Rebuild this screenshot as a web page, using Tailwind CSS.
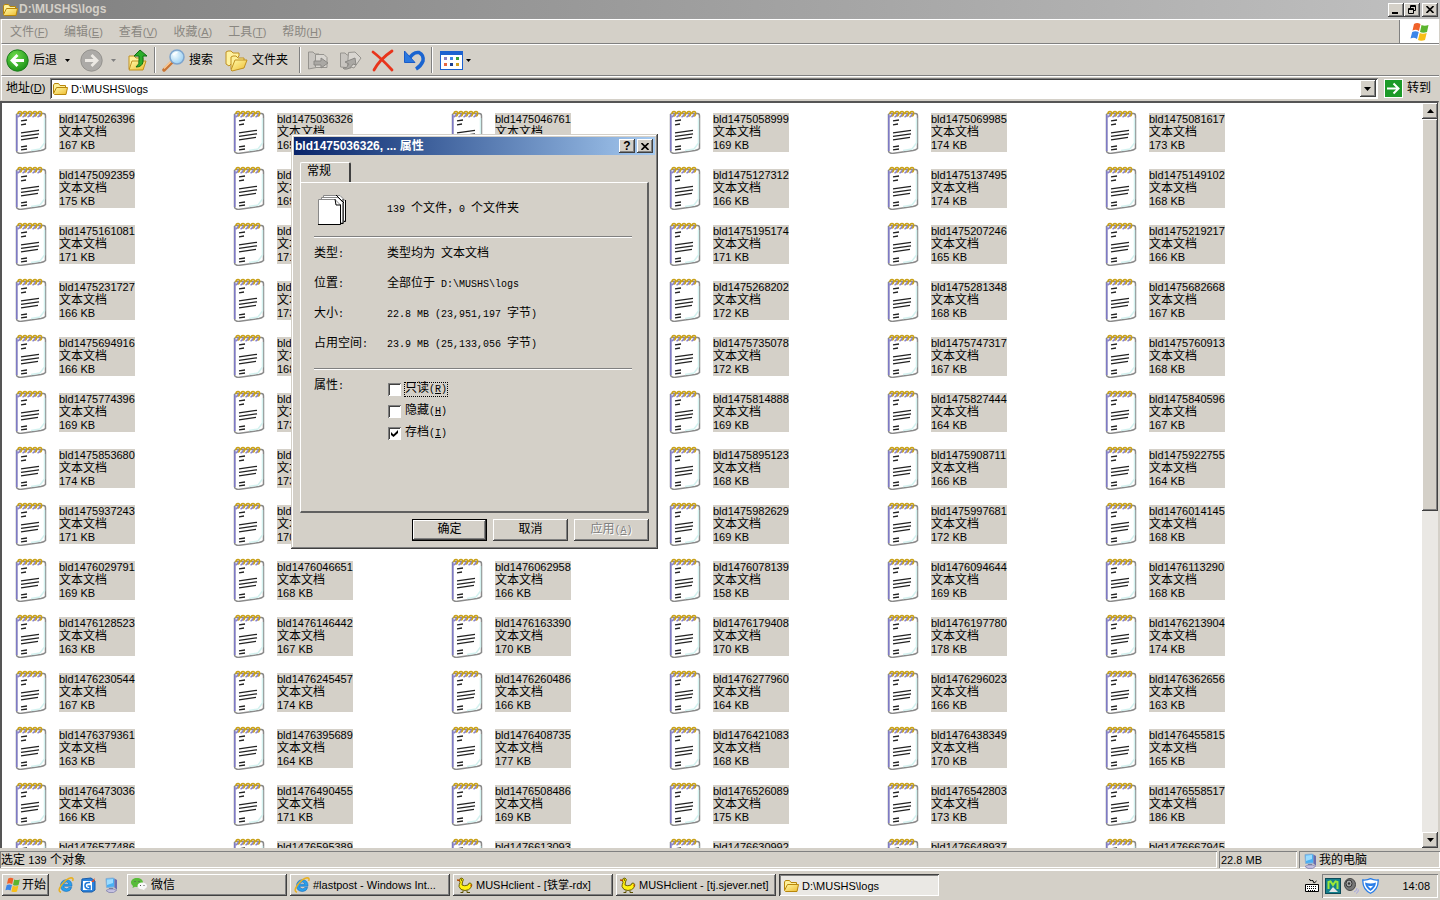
<!DOCTYPE html>
<html lang="zh-CN">
<head>
  <meta charset="UTF-8">
  <meta name="viewport" content="width=device-width, initial-scale=1.0">
  <title>D:\MUSHS\logs</title>
  <script src="https://cdn.jsdelivr.net/npm/@tailwindcss/browser@4"></script>
</head>
<body class="h-screen flex flex-col overflow-hidden bg-[#d4d0c8] text-black text-[12px] leading-[13px] font-['Liberation_Sans','Noto_Sans_CJK_SC',sans-serif]">

  <!-- shared icons -->
  <svg class="absolute w-0 h-0">
    <defs>
      <linearGradient id="fold" x1="0" y1="0" x2="1" y2="1"><stop offset="0" stop-color="#fff9a8"/><stop offset="1" stop-color="#eebc30"/></linearGradient>
      <radialGradient id="green" cx=".4" cy=".3" r=".8"><stop offset="0" stop-color="#6fdc4c"/><stop offset="1" stop-color="#128a12"/></radialGradient>
      <radialGradient id="lens" cx=".35" cy=".35" r=".8"><stop offset="0" stop-color="#f4fdff"/><stop offset="1" stop-color="#8cc8f0"/></radialGradient>
    </defs>
    <symbol id="notepad" viewBox="0 0 32 44">
      <path d="M3 3.500H28.500Q30.500 3.500 30.500 6V38.500Q29 40 26 40.500L5 43.500Q1.500 43 1.500 41V4.500z" fill="#fff" stroke="#8a8a8a" stroke-width="1.500"/>
      <path d="M1.800 5V41" stroke="#7e7ac4" stroke-width="1.600"/>
      <path d="M29.500 8V33L25 39 16 40.500" fill="none" stroke="#d4f2f0" stroke-width="1.500"/>
      <path d="M2.500 7q3-1 3-4M7.500 7q3-1 3-4M12.500 7q3-1 3-4M17.500 7q3-1 3-4M22.500 7q3-1 3-4" fill="none" stroke="#8680cc" stroke-width="1.500"/>
      <path d="M3 4Q3 1.500 5 1.500T6.500 4 5 5.500M8 4Q8 1.500 10 1.500T11.500 4 10 5.500M13 4Q13 1.500 15 1.500T16.500 4 15 5.500M18 4Q18 1.500 20 1.500T21.500 4 20 5.500M23 4Q23 1.500 25 1.500T26.500 4 25 5.500" fill="none" stroke="#c8a018" stroke-width="1.600"/>
      <path d="M6 10.800l6-.8M6 14.800l5-.8M6 22.800l18-2.500M6 26.300l18-2.500M6 29.800l17-2.500M6 36.800l6-.8M6 39.800l6-.8" stroke="#222" stroke-width="1.300"/>
    </symbol>
    <symbol id="folder" viewBox="0 0 16 16">
      <path d="M1.500 12V4L2.500 2.500H6.500L8 4.500H13.500V7" fill="#fdf09a" stroke="#b8860b"/>
      <path d="M1.500 12.500L4.500 6.500H15.500L14 13.500H2.500z" fill="url(#fold)" stroke="#b8860b"/>
    </symbol>
    <symbol id="winflag" viewBox="0 0 20 20">
      <path d="M4 2q3-2 6.500 0L9 9Q6 7 2.500 8.500z" fill="#f0622a"/>
      <path d="M11.500 3q3 1.500 7 0L17 10q-4 1.500-7 0z" fill="#5cb52e"/>
      <path d="M2.200 10q3-1.500 6.500 0L7 17Q4 15 .5 16.500z" fill="#3c86e8"/>
      <path d="M9.700 11q3 1.500 7 0L15 18q-4 1.500-7 0z" fill="#f8bf18"/>
    </symbol>
    <symbol id="ie" viewBox="0 0 16 16">
      <path d="M14 9.200H5.600Q6 11.800 8.500 11.800 10 11.800 10.800 10.500H13.700Q12.500 14.500 8.300 14.500 2.500 14 2.500 8.800 2.800 3 8.300 2.700 14.200 3 14 9.200zM5.700 7.200H10.900Q10.500 5 8.300 5 6.200 5.100 5.700 7.200z" fill="#28a0ee" stroke="#1268b8" stroke-width=".6"/>
      <path d="M3 15.200Q-1 14.500 3.500 8 8.500 1.500 13 .8 16 .8 14.600 4" fill="none" stroke="#e8b020" stroke-width="1.500"/>
    </symbol>
    <symbol id="pc" viewBox="0 0 16 16">
      <path d="M4 1.500L11.500 1 12.500 2V10L4.500 10.500z" fill="#48b0f4" stroke="#8ab0d4"/>
      <path d="M5 2.500L11 2V6L5 8z" fill="#9cdcff"/>
      <path d="M12.500 1.500L15 3V13L12.500 10.500z" fill="#6a6cae"/>
      <path d="M7 11h4v2H7z" fill="#707890"/>
      <path d="M4 13.500l3-1.500h5l2.500 1.500-3 2H7z" fill="#c4c0e0" stroke="#8484b0" stroke-width=".8"/>
    </symbol>
    <symbol id="duck" viewBox="0 0 16 16">
      <path d="M2.500 3.500Q2.500 .8 5 1 7.500 2 5.500 5L5 8Q7.500 9.500 11 8 11.500 5.500 13.500 6 16 7.500 14 10.500 12 13.500 8 13.500 3 13.500 2 9.500 2 7.500 3 5.500z" fill="#fff010" stroke="#5c5000" stroke-width=".9"/>
      <path d="M6 13.500v2H3.500M10 13.500v2h3" fill="none" stroke="#5c5000"/>
      <path d="M0 3l3 .5" stroke="#b04800" stroke-width="1.500"/><path d="M4 2.500h1v1H4z"/>
      <path d="M13 7.500l2 .5-1 2z" fill="#d04010"/>
    </symbol>
    <symbol id="close" viewBox="0 0 8 7"><path d="M.5 0L7.500 7M7.500 0L.5 7" stroke="#000" stroke-width="1.600"/></symbol>
  </svg>

  <!-- title bar -->
  <header class="h-[19px] shrink-0 flex items-center pl-[2px] pr-[2px] bg-linear-to-r from-[#808080] to-[#c0c0c0]">
    <svg class="w-4 h-4"><use href="#folder"/></svg>
    <h1 class="flex-1 font-bold text-[12px] text-[#d4d0c8] pl-px">D:\MUSHS\logs</h1>
    <button aria-label="最小化" class="w-4 h-[14px] flex items-end pb-[3px] pl-1 bg-[#d4d0c8] shadow-[inset_-1px_-1px_0_#404040,inset_1px_1px_0_#fff,inset_-2px_-2px_0_#808080]"><span class="w-[6px] h-[2px] bg-black"></span></button>
    <button aria-label="还原" class="w-4 h-[14px] flex items-center justify-center bg-[#d4d0c8] shadow-[inset_-1px_-1px_0_#404040,inset_1px_1px_0_#fff,inset_-2px_-2px_0_#808080]">
      <svg class="w-[9px] h-[9px]" viewBox="0 0 9 9" fill="none" stroke="#000"><path d="M2.500 3V.500H7.500V5.500H6M2 1.500H8M.500 3.500H5.500V8.500H.500zM0 4.500H6"/></svg>
    </button>
    <button aria-label="关闭" class="w-4 h-[14px] ml-[2px] flex items-center justify-center bg-[#d4d0c8] shadow-[inset_-1px_-1px_0_#404040,inset_1px_1px_0_#fff,inset_-2px_-2px_0_#808080]"><svg class="w-2 h-[7px]"><use href="#close"/></svg></button>
  </header>

  <!-- menu bar -->
  <nav class="h-[25px] shrink-0 flex items-stretch ml-px mr-px border-t border-l border-t-white border-l-white border-b border-b-[#808080] text-[#8a8781]">
    <div class="flex-1 flex items-center gap-4 pl-2 pt-[2px]">
      <button>文件<span class="text-[11px]">(<u>F</u>)</span></button>
      <button>编辑<span class="text-[11px]">(<u>E</u>)</span></button>
      <button>查看<span class="text-[11px]">(<u>V</u>)</span></button>
      <button>收藏<span class="text-[11px]">(<u>A</u>)</span></button>
      <button>工具<span class="text-[11px]">(<u>T</u>)</span></button>
      <button>帮助<span class="text-[11px]">(<u>H</u>)</span></button>
    </div>
    <div class="w-10 bg-white border-l border-l-[#808080] flex items-center justify-center"><svg class="w-5 h-5"><use href="#winflag"/></svg></div>
  </nav>

  <!-- toolbar -->
  <div class="h-8 shrink-0 flex items-center ml-px mr-px pl-1 border-t border-l border-t-white border-l-white border-b border-b-[#808080]">
    <button class="w-[74px] flex items-center gap-1">
      <svg class="w-[23px] h-[23px]" viewBox="0 0 23 23"><circle cx="11.500" cy="11.500" r="10.700" fill="url(#green)" stroke="#1c7c1c"/><path d="M18 11.500H6M11.500 6L6 11.500L11.500 17" fill="none" stroke="#fff" stroke-width="2.800"/></svg>
      后退
      <svg class="w-[5px] h-[3px] ml-1" viewBox="0 0 5 3"><path d="M0 0H5L2.500 3z"/></svg>
    </button>
    <button class="w-12 flex items-center gap-2" aria-label="前进">
      <svg class="w-[23px] h-[23px]" viewBox="0 0 23 23"><circle cx="11.500" cy="11.500" r="10.700" fill="#acaaa7" stroke="#94928e"/><path d="M5 11.500H17M11.500 6L17 11.500L11.500 17" fill="none" stroke="#ece9e4" stroke-width="2.800"/></svg>
      <svg class="w-[5px] h-[3px]" viewBox="0 0 5 3"><path d="M0 0H5L2.500 3z" fill="#808080"/></svg>
    </button>
    <button class="w-[26px]" aria-label="向上">
      <svg class="w-[21px] h-[23px]" viewBox="0 0 21 23"><path d="M1 20V7H6L8 9H15V20" fill="#fdf09a" stroke="#c09020"/><path d="M1 21L4 12H18L15 21z" fill="url(#fold)" stroke="#c09020"/><path d="M6 7L12 1L19 7H15V13Q14 18 8 18Q12 15 11 11V7z" fill="#2cae2c" stroke="#0e6e14"/></svg>
    </button>
    <span class="w-[2px] h-[26px] border-l border-l-[#808080] border-r border-r-white"></span>
    <button class="w-[63px] flex items-center gap-1 pl-[6px] whitespace-nowrap">
      <svg class="w-[23px] h-[23px] shrink-0" viewBox="0 0 23 23"><path d="M10 13L2 21" stroke="#c87434" stroke-width="3.500" stroke-linecap="round"/><path d="M9 12.500L2 19.500" stroke="#ffcf98" stroke-width="1.200"/><circle cx="15" cy="8" r="7" fill="url(#lens)" stroke="#7ea4cc" stroke-width="1.500"/><path d="M11 6Q12.500 3.500 15.500 3.500" fill="none" stroke="#fff" stroke-width="1.500"/></svg>
      搜索
    </button>
    <button class="w-[80px] flex items-center gap-1 pl-[6px] whitespace-nowrap">
      <svg class="w-[23px] h-[23px] shrink-0" viewBox="0 0 23 23"><path d="M1 15V3L3 2H6L8 4H14V7L4 17z" fill="#fff2a0" stroke="#c09020"/><path d="M6 20V8L8 7H11L13 9H19V12" fill="#fdf09a" stroke="#c09020"/><path d="M6 21L10 11H22L19 19L7 22z" fill="url(#fold)" stroke="#c09020"/></svg>
      文件夹
    </button>
    <span class="w-[2px] h-[26px] border-l border-l-[#808080] border-r border-r-white"></span>
    <button class="w-8 pl-[6px]" aria-label="复制到">
      <svg class="w-[23px] h-[23px]" viewBox="0 0 23 23" fill="#c8c5c0" stroke="#96948f"><path d="M1.500 20V3H6L8 5H12V18z"/><path d="M8.500 5.500H17L20 8.500V18.500H8.500z" fill="#d9d6d1"/><path d="M7 12H14V9L21 14L14 19V16H7z" fill="#aaa8a4" stroke="#8a8884"/></svg>
    </button>
    <button class="w-8 pl-[6px]" aria-label="移至">
      <svg class="w-[23px] h-[23px]" viewBox="0 0 23 23" fill="#c8c5c0" stroke="#96948f"><path d="M1.500 18V4H6L8 6H12V19z"/><path d="M9.500 3.500L16 3L22 9L15 19L8.500 17z" fill="#d9d6d1"/><path d="M4 19Q8 20 10 15L6 13L16 9L17 16L14 15Q11 21 5 20z" fill="#aaa8a4" stroke="#8a8884"/></svg>
    </button>
    <button class="w-8 pl-[6px]" aria-label="删除">
      <svg class="w-[23px] h-[23px]" viewBox="0 0 23 23"><path d="M2 3Q10 9 21 21M21 2Q9 10 3 21" fill="none" stroke="#e8341c" stroke-width="2.800" stroke-linecap="round"/></svg>
    </button>
    <button class="w-8 pl-[6px]" aria-label="撤消">
      <svg class="w-[23px] h-[23px]" viewBox="0 0 23 23"><path d="M6 10Q10 2.500 16 3.500Q21 6 20 12Q18 17 13 20" fill="none" stroke="#1a64d0" stroke-width="3.500"/><path d="M1.500 2V13.500H12z" fill="#2a78e0" stroke="#1a5cc8"/></svg>
    </button>
    <span class="w-[2px] h-[26px] ml-[2px] border-l border-l-[#808080] border-r border-r-white"></span>
    <button class="pl-[7px] flex items-center gap-[3px]" aria-label="查看方式">
      <svg class="w-[23px] h-[19px]" viewBox="0 0 23 19"><rect x=".5" y=".5" width="22" height="18" fill="#fff" stroke="#1c62d0"/><path d="M0 0H23V4H0z" fill="#1c62d0"/><path d="M4 6h3v3H4z" fill="#8a80c0"/><path d="M10 6h3v3h-3z" fill="#3c88e8"/><path d="M16 6h3v3h-3z" fill="#38a038"/><path d="M4 12h3v3H4z" fill="#e86840"/><path d="M10 12h3v3h-3z" fill="#1a4090"/><path d="M16 12h3v3h-3z" fill="#d0a020"/></svg>
      <svg class="w-[5px] h-[3px]" viewBox="0 0 5 3"><path d="M0 0H5L2.500 3z"/></svg>
    </button>
  </div>

  <!-- address bar -->
  <div class="h-6 shrink-0 flex items-center ml-px mr-px pl-1 border-t border-l border-t-white border-l-white">
    <label for="address" class="w-11 shrink-0">地址<span class="text-[11px]">(<u>D</u>)</span></label>
    <div class="flex-1 h-[21px] flex items-center bg-white p-[2px] shadow-[inset_1px_1px_0_#808080,inset_-1px_-1px_0_#fff,inset_2px_2px_0_#404040]">
      <svg class="w-4 h-4 shrink-0"><use href="#folder"/></svg>
      <input id="address" type="text" value="D:\MUSHS\logs" class="flex-1 h-4 pl-[3px] text-[11px] outline-none">
      <button aria-label="展开" class="w-4 h-[17px] flex items-center justify-center bg-[#d4d0c8] shadow-[inset_-1px_-1px_0_#404040,inset_1px_1px_0_#fff,inset_-2px_-2px_0_#808080]"><svg class="w-[7px] h-1" viewBox="0 0 7 4"><path d="M0 0H7L3.500 4z"/></svg></button>
    </div>
    <button class="flex items-center gap-1 ml-[6px] pr-2">
      <svg class="w-[19px] h-[19px]" viewBox="0 0 19 19"><rect x=".5" y=".5" width="18" height="18" fill="#1c9a28" stroke="#fff"/><path d="M3 9.500H14M9.500 4.500L14.500 9.500L9.500 14.500" fill="none" stroke="#fff" stroke-width="2"/></svg>
      转到
    </button>
  </div>

  <!-- file view -->
  <main class="flex-1 min-h-0 mt-px flex border-t-2 border-l-2 border-t-[#555] border-l-[#555] mr-px border-r border-r-[#d4d0c8] bg-white">
    <ul id="files" class="flex-1 overflow-hidden grid grid-cols-[repeat(auto-fill,218px)] auto-rows-[56px] content-start pt-[7px]"></ul>
    <div class="w-4 flex flex-col bg-[#eae8e4]">
      <button aria-label="向上滚动" class="h-4 flex items-center justify-center bg-[#d4d0c8] shadow-[inset_-1px_-1px_0_#404040,inset_1px_1px_0_#fff,inset_-2px_-2px_0_#808080]"><svg class="w-[7px] h-1" viewBox="0 0 7 4"><path d="M0 4H7L3.500 0z"/></svg></button>
      <div class="flex-1">
        <div class="h-[55%] bg-[#d4d0c8] shadow-[inset_-1px_-1px_0_#404040,inset_1px_1px_0_#fff,inset_-2px_-2px_0_#808080]"></div>
      </div>
      <button aria-label="向下滚动" class="h-4 flex items-center justify-center bg-[#d4d0c8] shadow-[inset_-1px_-1px_0_#404040,inset_1px_1px_0_#fff,inset_-2px_-2px_0_#808080]"><svg class="w-[7px] h-1" viewBox="0 0 7 4"><path d="M0 0H7L3.500 4z"/></svg></button>
    </div>
  </main>

  <!-- status bar -->
  <footer class="h-[22px] shrink-0 flex gap-[2px] pt-[3px] pb-px border-b border-b-white">
    <div class="flex-1 flex items-center pl-px pt-[2px] shadow-[inset_1px_1px_0_#808080,inset_-1px_-1px_0_#fff]"><p>选定 <span class="text-[11px]">139</span> 个对象</p></div>
    <div class="w-[78px] flex items-center pl-[2px] pt-[2px] text-[11px] shadow-[inset_1px_1px_0_#808080,inset_-1px_-1px_0_#fff]">22.8 MB</div>
    <div class="w-[141px] flex items-center gap-[2px] pl-[2px] pt-[2px] shadow-[inset_1px_1px_0_#808080,inset_-1px_-1px_0_#fff]"><svg class="w-4 h-4"><use href="#pc"/></svg>我的电脑</div>
  </footer>

  <!-- taskbar -->
  <div class="h-[30px] shrink-0 flex items-start pt-[3px] pl-[2px] pr-[2px] border-t border-t-white">
    <button class="w-[47px] h-[22px] flex items-center gap-px pl-[3px] whitespace-nowrap shadow-[inset_-1px_-1px_0_#404040,inset_1px_1px_0_#fff,inset_-2px_-2px_0_#808080]"><svg class="w-4 h-4"><use href="#winflag"/></svg>开始</button>
    <div class="w-[78px] h-[22px] flex items-center gap-[6px] pl-[9px]">
      <svg class="w-4 h-4"><use href="#ie"/></svg>
      <svg class="w-4 h-4" viewBox="0 0 16 16"><path d="M2 2L11 1L15 4V13L12 15H3L1 13z" fill="#2a82dc" stroke="#1a5ca8"/><path d="M3 4H12V13H3z" fill="#fff"/><path d="M10 5.500Q5 5 5 8.500T10 12V9H7.500" fill="none" stroke="#1e78d8" stroke-width="1.600"/><path d="M11 5l4-4-1 4z" fill="#e05030"/></svg>
      <svg class="w-4 h-4"><use href="#pc"/></svg>
    </div>
    <div class="flex-1 flex gap-[3px] text-[11px]">
      <button class="w-40 h-[22px] flex items-center gap-1 pl-1 text-[12px] whitespace-nowrap shadow-[inset_-1px_-1px_0_#404040,inset_1px_1px_0_#fff,inset_-2px_-2px_0_#808080]">
        <svg class="w-4 h-4" viewBox="0 0 16 16"><path d="M6 1C2.500 1 0 3 0 5.500 0 7 1 8 2 9L1.500 11 4 9.700C8 10.500 12 8.500 12 5.500 12 3 9.500 1 6 1z" fill="#58bc38"/><path d="M11 5.500C8.500 5.500 6.500 7 6.500 9S8.500 12.300 11 12.300L13.500 13.300 13.300 12C15 11.300 16 10.300 16 9 16 7 13.500 5.500 11 5.500z" fill="#f8f8f8"/><path d="M3.500 4h1v1h-1zM7.500 4h1v1h-1zM9 8h1v1H9zM12.500 8h1v1h-1z" fill="#555"/></svg>
        微信
      </button>
      <button class="w-40 h-[22px] flex items-center gap-[3px] pl-1 whitespace-nowrap shadow-[inset_-1px_-1px_0_#404040,inset_1px_1px_0_#fff,inset_-2px_-2px_0_#808080]"><svg class="w-4 h-4"><use href="#ie"/></svg>#lastpost - Windows Int...</button>
      <button class="w-40 h-[22px] flex items-center gap-[3px] pl-1 whitespace-nowrap shadow-[inset_-1px_-1px_0_#404040,inset_1px_1px_0_#fff,inset_-2px_-2px_0_#808080]"><svg class="w-4 h-4"><use href="#duck"/></svg>MUSHclient - [铁掌-rdx]</button>
      <button class="w-40 h-[22px] flex items-center gap-[3px] pl-1 whitespace-nowrap shadow-[inset_-1px_-1px_0_#404040,inset_1px_1px_0_#fff,inset_-2px_-2px_0_#808080]"><svg class="w-4 h-4"><use href="#duck"/></svg>MUSHclient - [tj.sjever.net]</button>
      <button class="w-40 h-[22px] flex items-center gap-[3px] pl-1 pt-[2px] whitespace-nowrap bg-[#eae8e4] shadow-[inset_1px_1px_0_#404040,inset_-1px_-1px_0_#fff,inset_2px_2px_0_#808080]"><svg class="w-4 h-4"><use href="#folder"/></svg>D:\MUSHS\logs</button>
    </div>
    <svg class="w-[14px] h-[14px] mt-[5px] mr-[3px]" viewBox="0 0 14 14"><path d="M4.500 0q0 2 2 1.500t2 1.500 3-1" fill="none" stroke="#000"/><path d="M.5 5.500H13.500V12.500H.5z" fill="#fff" stroke="#000"/><path d="M2 7.500H12M2 9.500H12M3 11.500H11" stroke="#000" stroke-dasharray="1 1"/></svg>
    <div class="w-[116px] h-6 flex items-center gap-[2px] pl-[3px] shadow-[inset_1px_1px_0_#808080,inset_-1px_-1px_0_#fff]">
      <svg class="w-4 h-4" viewBox="0 0 16 16"><rect x=".5" y=".5" width="15" height="15" fill="#15808c" stroke="#0c4a58"/><path d="M4 14L8 9L13 14z" fill="#e4e4e4"/><path d="M3.500 11V4L5.500 3.500 8 7 10.500 3.500 12.500 4V11" fill="none" stroke="#9be838" stroke-width="2"/></svg>
      <svg class="w-4 h-4" viewBox="0 0 16 16"><ellipse cx="7" cy="6.500" rx="5.500" ry="6" fill="#777" stroke="#444"/><ellipse cx="6" cy="5.500" rx="3" ry="3.500" fill="#aaa" stroke="#333"/><circle cx="6" cy="5.500" r="1.200" fill="#333"/><path d="M11 14q3-1 3-4M13 15.500q2.500-1 2.500-4" fill="none" stroke="#a8a8e0"/></svg>
      <svg class="w-[17px] h-4 ml-px" viewBox="0 0 17 16"><path d="M8.500 .7Q12 2.500 16.200 2Q16.500 11 8.500 15.300Q.5 11 .8 2Q5 2.500 8.500 .7z" fill="#fff" stroke="#2a7ee8" stroke-width="1.300"/><path d="M3 4.500Q8.500 6.500 14 4.500Q13.500 10 8.500 13Q3.500 10 3 4.500z" fill="#2a7ee8"/><path d="M5.500 7.500Q8.500 8.500 11.500 7.500L8.500 10.500z" fill="#fff"/></svg>
      <time class="flex-1 pr-2 text-right text-[11px]">14:08</time>
    </div>
  </div>

  <!-- properties dialog -->
  <section role="dialog" aria-labelledby="dlgTitle" class="absolute left-[291px] top-[134px] w-[367px] p-[3px] bg-[#d4d0c8] shadow-[inset_-1px_-1px_0_#404040,inset_1px_1px_0_#d4d0c8,inset_-2px_-2px_0_#808080,inset_2px_2px_0_#fff]">
    <div class="h-[18px] flex items-center pl-px pr-[2px] bg-linear-to-r from-[#0a246a] to-[#a6caf0]">
      <h2 id="dlgTitle" class="flex-1 font-bold text-[12px] text-white">bld1475036326, ... 属性</h2>
      <button aria-label="帮助" class="w-4 h-[14px] flex items-center justify-center font-bold bg-[#d4d0c8] shadow-[inset_-1px_-1px_0_#404040,inset_1px_1px_0_#fff,inset_-2px_-2px_0_#808080]">?</button>
      <button aria-label="关闭" class="w-4 h-[14px] ml-[2px] flex items-center justify-center bg-[#d4d0c8] shadow-[inset_-1px_-1px_0_#404040,inset_1px_1px_0_#fff,inset_-2px_-2px_0_#808080]"><svg class="w-2 h-[7px]"><use href="#close"/></svg></button>
    </div>
    <form class="px-[6px] pt-[7px] pb-[5px] text-[10px] font-['Liberation_Mono','Noto_Sans_CJK_SC',monospace]">
      <button type="button" class="block w-[51px] h-5 pl-[6px] text-left text-[12px] border-t border-l border-white border-r-2 border-r-[#404040] rounded-t-[2px]">常规</button>
      <div class="h-[331px] pl-[13px] pr-[15px] border-t border-l border-t-white border-l-white border-r-2 border-b-2 border-r-[#606060] border-b-[#606060]">
        <div class="h-[53px] grid grid-cols-[73px_1fr] items-center">
          <svg class="w-7 h-8 ml-1" viewBox="0 0 28 32"><path d="M5.500 1.500H22L27.500 7V27H5.500z" fill="#fff" stroke="#888"/><path d="M27.500 6V27.500H24M25 5V29.500H22" fill="none" stroke="#000"/><path d="M3.500 3.500H20L25.500 9V29H3.500z" fill="#fff" stroke="#888"/><path d="M25 9V29.500H21" fill="none" stroke="#000"/><path d="M.5 5.500H17L22.500 11V30.500H.5z" fill="#fff" stroke="#888"/><path d="M17 5L18 11H23M22.500 11V30.500H0M18 1L26 9" fill="none" stroke="#000"/></svg>
          <p>139 <span class="text-[12px]">个文件，</span>0 <span class="text-[12px]">个文件夹</span></p>
        </div>
        <hr class="border-t border-t-[#808080] border-b border-b-white">
        <dl class="grid grid-cols-[73px_1fr] auto-rows-[30px] items-center pt-px">
          <dt><span class="text-[12px]">类型</span>:</dt>
          <dd><span class="text-[12px]">类型均为</span> <span class="text-[12px]">文本文档</span></dd>
          <dt><span class="text-[12px]">位置</span>:</dt>
          <dd><span class="text-[12px]">全部位于</span> D:\MUSHS\logs</dd>
          <dt><span class="text-[12px]">大小</span>:</dt>
          <dd>22.8 MB (23,951,197 <span class="text-[12px]">字节</span>)</dd>
          <dt><span class="text-[12px]">占用空间</span>:</dt>
          <dd>23.9 MB (25,133,056 <span class="text-[12px]">字节</span>)</dd>
        </dl>
        <hr class="mt-[9px] border-t border-t-[#808080] border-b border-b-white">
        <div class="grid grid-cols-[73px_1fr] pt-2">
          <p class="pt-[2px]"><span class="text-[12px]">属性</span>:</p>
          <div class="pl-px">
            <div class="h-[22px] flex items-center gap-1">
              <input id="readonly" type="checkbox" class="appearance-none w-[13px] h-[13px] bg-white shadow-[inset_1px_1px_0_#808080,inset_-1px_-1px_0_#fff,inset_2px_2px_0_#404040]">
              <label for="readonly" class="outline outline-dotted outline-black"><span class="text-[12px]">只读</span>(<u>R</u>)</label>
            </div>
            <div class="h-[22px] flex items-center gap-1">
              <input id="hide" type="checkbox" class="appearance-none w-[13px] h-[13px] bg-white shadow-[inset_1px_1px_0_#808080,inset_-1px_-1px_0_#fff,inset_2px_2px_0_#404040]">
              <label for="hide"><span class="text-[12px]">隐藏</span>(<u>H</u>)</label>
            </div>
            <div class="h-[22px] flex items-center gap-1">
              <span class="grid w-[13px] h-[13px] place-items-center">
                <input id="archive" type="checkbox" checked class="peer col-start-1 row-start-1 appearance-none w-[13px] h-[13px] bg-white shadow-[inset_1px_1px_0_#808080,inset_-1px_-1px_0_#fff,inset_2px_2px_0_#404040]">
                <svg class="hidden peer-checked:block col-start-1 row-start-1 w-[7px] h-[7px] pointer-events-none" viewBox="0 0 7 7"><path d="M0 2V5L2.500 7L7 3V0L2.500 4.500z"/></svg>
              </span>
              <label for="archive"><span class="text-[12px]">存档</span>(<u>I</u>)</label>
            </div>
          </div>
        </div>
      </div>
      <div class="flex justify-end gap-[6px] pt-[6px]">
        <button type="button" class="w-[75px] h-[22px] text-[12px] border border-black shadow-[inset_-1px_-1px_0_#404040,inset_1px_1px_0_#fff,inset_-2px_-2px_0_#808080]">确定</button>
        <button type="button" class="w-[75px] h-[22px] text-[12px] shadow-[inset_-1px_-1px_0_#404040,inset_1px_1px_0_#fff,inset_-2px_-2px_0_#808080]">取消</button>
        <button type="button" disabled class="w-[75px] h-[22px] text-[#808080] [text-shadow:1px_1px_0_#fff] shadow-[inset_-1px_-1px_0_#404040,inset_1px_1px_0_#fff,inset_-2px_-2px_0_#808080]"><span class="text-[12px]">应用</span>(<u>A</u>)</button>
      </div>
    </form>
  </section>

  <script>
    // name, size in KB
    const files = [
      [1475026396, 167], [1475036326, 165], [1475046761, 166], [1475058999, 169], [1475069985, 174], [1475081617, 173],
      [1475092359, 175], [1475104120, 169], [1475115846, 167], [1475127312, 166], [1475137495, 174], [1475149102, 168],
      [1475161081, 171], [1475172450, 171], [1475183792, 168], [1475195174, 171], [1475207246, 165], [1475219217, 166],
      [1475231727, 166], [1475243915, 173], [1475256038, 170], [1475268202, 172], [1475281348, 168], [1475682668, 167],
      [1475694916, 166], [1475708325, 168], [1475721760, 169], [1475735078, 172], [1475747317, 167], [1475760913, 168],
      [1475774396, 169], [1475787892, 173], [1475801355, 166], [1475814888, 169], [1475827444, 164], [1475840596, 167],
      [1475853680, 174], [1475867504, 173], [1475881327, 170], [1475895123, 168], [1475908711, 166], [1475922755, 164],
      [1475937243, 171], [1475952385, 170], [1475967506, 168], [1475982629, 169], [1475997681, 172], [1476014145, 168],
      [1476029791, 169], [1476046651, 168], [1476062958, 166], [1476078139, 158], [1476094644, 169], [1476113290, 168],
      [1476128523, 163], [1476146442, 167], [1476163390, 170], [1476179408, 170], [1476197780, 178], [1476213904, 174],
      [1476230544, 167], [1476245457, 174], [1476260486, 166], [1476277960, 164], [1476296023, 166], [1476362656, 163],
      [1476379361, 163], [1476395689, 164], [1476408735, 177], [1476421083, 168], [1476438349, 170], [1476455815, 165],
      [1476473036, 166], [1476490455, 171], [1476508486, 169], [1476526089, 175], [1476542803, 173], [1476558517, 186],
      [1476577486, 168], [1476595389, 166], [1476613093, 167], [1476630992, 169], [1476648937, 170], [1476667945, 168]
    ];

    document.getElementById('files').innerHTML = files.map(([id, kb]) => `
      <li class="flex items-start gap-3 pl-[13px]">
        <svg class="w-8 h-11"><use href="#notepad"/></svg>
        <div class="w-[76px] mt-[3px] bg-[#d4d0c8] text-[11px]">
          <p>bld${id}</p>
          <p class="text-[12px]">文本文档</p>
          <p>${kb} KB</p>
        </div>
      </li>`).join('');
  </script>
</body>
</html>
